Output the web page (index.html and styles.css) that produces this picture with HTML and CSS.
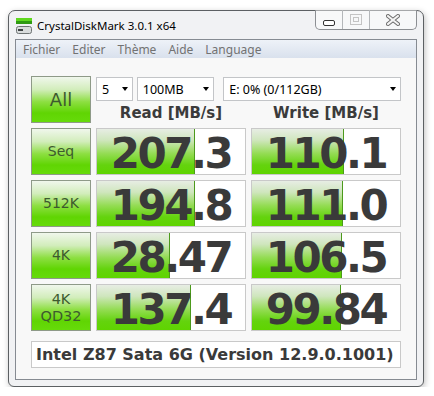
FILE: index.html
```html
<!DOCTYPE html>
<html lang="fr">
  <head>
    <meta charset="UTF-8" />
    <meta name="viewport" content="width=device-width, initial-scale=1.0" />
    <title>CrystalDiskMark 3.0.1 x64</title>
    <link rel="stylesheet" href="styles.css">
  </head>
  <body>
    <div class="window">
        <div class="titlebar">
            <svg class="app-icon" width="16" height="16" viewBox="0 0 16 16">
                <rect x="0" y="0" width="16" height="3" fill="#5fd81e"/>
                <rect x="0" y="3" width="16" height="3" fill="#2f9a12"/>
                <rect x="0.5" y="8.5" width="15" height="7" rx="2" fill="#d9dcdc" stroke="#6f7474"/>
                <rect x="2" y="11" width="5" height="2" fill="#3d4242"/>
            </svg>
            <span class="title">CrystalDiskMark 3.0.1 x64</span>
            <div class="caption">
                <span class="cap cap-min">
                    <svg width="12" height="6" viewBox="0 0 12 6"><rect x="0.5" y="0.5" width="11" height="5" rx="1.5" fill="#fff" stroke="#333"/></svg>
                </span>
                <span class="cap cap-max">
                    <svg width="12" height="11" viewBox="0 0 12 11"><rect x="0.5" y="0.5" width="11" height="10" fill="none" stroke="#c4c4c4"/><rect x="3.5" y="3.5" width="5" height="4" fill="none" stroke="#c4c4c4"/></svg>
                </span>
                <span class="cap cap-close">
                    <svg width="14" height="12" viewBox="0 0 14 12"><path d="M2 2 L12 10 M12 2 L2 10" stroke="#6c6c6c" stroke-width="4" stroke-linecap="square"/><path d="M2 2 L12 10 M12 2 L2 10" stroke="#f4f4f4" stroke-width="2" stroke-linecap="square"/></svg>
                </span>
            </div>
        </div>

        <div class="frame">
            <div class="menubar">
                <span class="menu-item">Fichier</span>
                <span class="menu-item">Editer</span>
                <span class="menu-item">Thème</span>
                <span class="menu-item">Aide</span>
                <span class="menu-item">Language</span>
            </div>

            <div class="client">
                <div class="grid">
                    <div class="test-btn btn-all">All</div>
                    <div class="top">
                        <div class="combos">
                            <div class="combo combo-count">5<span class="arrow"></span></div>
                            <div class="combo combo-size">100MB<span class="arrow"></span></div>
                            <div class="combo combo-drive">E: 0% (0/112GB)<span class="arrow"></span></div>
                        </div>
                        <div class="heads">
                            <div class="head">Read [MB/s]</div>
                            <div class="head">Write [MB/s]</div>
                        </div>
                    </div>

                    <div class="test-btn">Seq</div>
                    <div class="value" style="--w: 97px">207.3</div>
                    <div class="value" style="--w: 91px">110.1</div>

                    <div class="test-btn">512K</div>
                    <div class="value" style="--w: 97px">194.8</div>
                    <div class="value" style="--w: 90px">111.0</div>

                    <div class="test-btn">4K</div>
                    <div class="value" style="--w: 72px">28.47</div>
                    <div class="value" style="--w: 89px">106.5</div>

                    <div class="test-btn btn-qd">4K<br>QD32</div>
                    <div class="value" style="--w: 93px">137.4</div>
                    <div class="value" style="--w: 88px">99.84</div>
                </div>

                <div class="comment">Intel Z87 Sata 6G (Version 12.9.0.1001)</div>
            </div>
        </div>
    </div>
  </body>
</html>
```

FILE: styles.css
```css
body {
    margin: 0;
    background: #ffffff;
    font-family: "Noto Sans", sans-serif;
}
.window {
    box-sizing: border-box;
    width: 416px;
    height: 377px;
    margin: 10px 0 0 8px;
    border: 1px solid #5c6063;
    border-radius: 7px 7px 6px 6px;
    background: #f1f2f4;
    box-shadow: 1px 2px 6px rgba(0, 0, 0, 0.25);
    display: flex;
    flex-direction: column;
}
.titlebar {
    height: 28px;
    display: flex;
    align-items: center;
}
.app-icon {
    margin-left: 7px;
    margin-top: 1px;
}
.title {
    margin-left: 5px;
    font-size: 11.5px;
    color: #000;
}
.caption {
    align-self: flex-start;
    margin: -1px 6px 0 auto;
    display: flex;
    height: 19px;
    border: 1px solid #8c8f93;
    border-top: none;
    border-radius: 0 0 5px 5px;
    background: rgba(255, 255, 255, 0.45);
}
.cap {
    display: flex;
    align-items: center;
    justify-content: center;
    width: 26px;
}
.cap + .cap {
    border-left: 1px solid #b4b7ba;
}
.cap-min svg {
    margin-top: 7px;
}
.cap-close {
    width: 46px;
}
.frame {
    flex: 1;
    display: flex;
    flex-direction: column;
    padding: 0 6px 6px 6px;
}
.menubar {
    height: 18px;
    display: flex;
    align-items: center;
    border: 1px solid #868b92;
    border-bottom: none;
    background: linear-gradient(#eef2f8, #d9e1ed);
    font-size: 12px;
    color: #727272;
    padding-left: 7px;
    column-gap: 12px;
}
.client {
    flex: 1;
    border: 1px solid #868b92;
    border-top: none;
    background: #f8f8f8;
    padding: 18px 0 0 15px;
}
.grid {
    display: grid;
    grid-template-columns: 60px 150px 150px;
    grid-template-rows: repeat(5, 47px);
    column-gap: 5px;
    row-gap: 5px;
}
.top {
    grid-column: 2 / 4;
    display: flex;
    flex-direction: column;
}
.combos {
    display: flex;
    margin-top: 1px;
}
.combo {
    box-sizing: border-box;
    height: 24px;
    border: 1px solid #c3c5c8;
    background: #fff;
    font-size: 12.5px;
    color: #000;
    display: flex;
    align-items: center;
    padding-left: 5px;
}
.combo-count {
    width: 37px;
}
.combo-size {
    width: 78px;
    margin-left: 4px;
}
.combo-drive {
    width: 179px;
    margin-left: 9px;
}
.arrow {
    margin-left: auto;
    margin-right: 4px;
    border-left: 3.5px solid transparent;
    border-right: 3.5px solid transparent;
    border-top: 4px solid #000;
}
.heads {
    display: flex;
    column-gap: 5px;
    margin-top: 3px;
}
.head {
    width: 150px;
    text-align: center;
    font-family: "DejaVu Sans", sans-serif;
    font-weight: bold;
    font-size: 15px;
    color: #3b3b3b;
}
.test-btn {
    box-sizing: border-box;
    border: 1px solid #8e9a88;
    background: linear-gradient(#f0f7ec 0%, #d2edbb 28%, #8ddf42 55%, #60d503 80%, #66db0a 100%);
    display: flex;
    align-items: center;
    justify-content: center;
    text-align: center;
    font-family: "DejaVu Sans", sans-serif;
    font-size: 14px;
    line-height: 17px;
    color: #3d5a2e;
}
.btn-all {
    font-size: 18px;
}
.btn-qd {
    font-size: 14.5px;
}
.value {
    box-sizing: border-box;
    border: 1px solid #c9c9c9;
    background-color: #fff;
    background-image:
        linear-gradient(#4c9a1c, #4c9a1c),
        linear-gradient(#e7ede4 0%, #cfe6bd 25%, #93dc52 55%, #64d30e 80%, #5fd400 100%);
    background-repeat: no-repeat;
    background-size: 1px 100%, var(--w) 100%;
    background-position: var(--w) 0, 0 0;
    font-family: "DejaVu Sans", sans-serif;
    font-weight: bold;
    font-size: 42px;
    letter-spacing: -2.5px;
    line-height: 45px;
    padding-top: 2px;
    text-align: center;
    color: #3a3a3a;
}
.comment {
    box-sizing: border-box;
    width: 370px;
    height: 27px;
    margin-top: 10px;
    border: 1px solid #c9c9c9;
    background: #fff;
    padding-left: 4px;
    font-family: "DejaVu Sans", sans-serif;
    font-weight: bold;
    font-size: 16px;
    line-height: 25px;
    color: #3a3a3a;
}
```
